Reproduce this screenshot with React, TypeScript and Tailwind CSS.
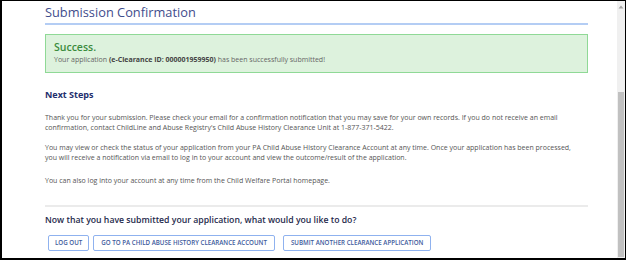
import React from 'react'

const font = { fontFamily: '"Open Sans", "Liberation Sans", sans-serif' }

function Scrollbar() {
  return (
    <div className="w-[8px] shrink-0 bg-[#f0f0f0] flex flex-col items-center">
      <svg width="6" height="4" viewBox="0 0 6 4" className="mt-[4px]">
        <path d="M3 0.5 L5.5 3.5 L0.5 3.5 Z" fill="#a3a3a3" />
      </svg>
      <div className="mt-[83px] w-[6px] flex-1 mb-[1px] bg-[#c1c1c1]" />
    </div>
  )
}

export default function App() {
  const buttons = [
    { label: 'Log out', cls: 'px-[6px]' },
    { label: 'Go to PA Child Abuse History Clearance Account', cls: 'px-[7px]' },
    { label: 'Submit another clearance application', cls: 'px-[7px] ml-[4px]' },
  ]

  return (
    <div className="w-[626px] h-[260px] bg-white border-black border-l-2 border-t border-r border-b-2 flex overflow-hidden" style={font}>
      <div className="flex-1 pl-[43px] pr-[29px]">
        {/* Titre */}
        <h1 className="text-[12.8px] leading-[20px] text-[#3f4d8c] pt-[1px]">Submission Confirmation</h1>
        <div className="h-[2px] bg-[#b4cdf4] mt-[1px]" />

        {/* Succès */}
        <div className="mt-[9px] h-[39px] border-[1.5px] border-[#8fd996] bg-[#ddf2dd] pl-[8px] pt-[5px]">
          <p className="text-[10.5px] leading-[14px] font-semibold text-[#3b8c3d]">Success.</p>
          <p className="text-[7px] leading-[12px] text-[#666]">
            Your application <strong className="font-bold text-[#444]">(e-Clearance ID: 000001959950)</strong> has been successfully submitted!
          </p>
        </div>

        {/* Prochaines étapes */}
        <h2 className="mt-[16px] text-[9px] leading-[12px] font-bold text-[#1f2f6e]">Next Steps</h2>
        <div className="mt-[12px] text-[7px] leading-[10px] text-[#555] whitespace-nowrap">
          <p>
            Thank you for your submission. Please check your email for a confirmation notification that you may save for your own records. If you do not receive an email
            <br />
            confirmation, contact ChildLine and Abuse Registry's Child Abuse History Clearance Unit at 1-877-371-5422.
          </p>
          <p className="mt-[10px]">
            You may view or check the status of your application from your PA Child Abuse History Clearance Account at any time. Once your application has been processed,
            <br />
            you will receive a notification via email to log in to your account and view the outcome/result of the application.
          </p>
          <p className="mt-[13px]">You can also log into your account at any time from the Child Welfare Portal homepage.</p>
        </div>

        <div className="mt-[19px] h-[2px] bg-[#ebebeb]" />

        <h3 className="mt-[6px] text-[8.7px] leading-[14px] font-semibold text-[#1f2a4c]">
          Now that you have submitted your application, what would you like to do?
        </h3>

        <div className="mt-[8px] flex gap-[4px] pl-[3px]">
          {buttons.map((b) => (
            <button
              key={b.label}
              className={`h-[16px] border border-[#8fb2ef] rounded-[2px] bg-white text-[6.2px] font-semibold uppercase text-[#3d5a9c] ${b.cls}`}
            >
              {b.label}
            </button>
          ))}
        </div>
      </div>
      <Scrollbar />
    </div>
  )
}
